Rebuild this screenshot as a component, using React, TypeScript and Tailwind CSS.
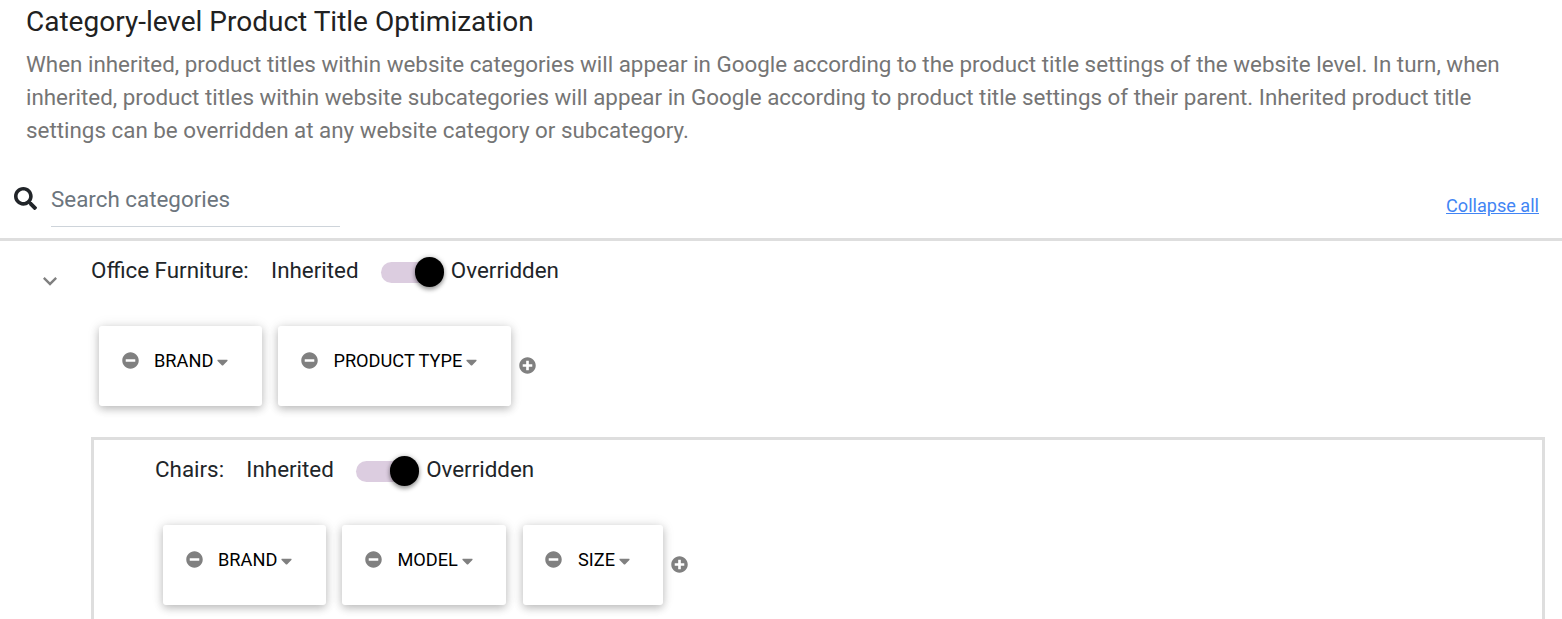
import { FaCaretDown, FaMinusCircle, FaPlusCircle, FaSearch } from "react-icons/fa";
import { MdExpandMore } from "react-icons/md";

interface CategoryProps {
  name: string;
  attributes: string[];
}

function Toggle() {
  return (
    <div className="relative w-[63px] h-[30px] ml-[22.5px] flex items-center shrink-0">
      <div className="w-[52px] h-[21px] rounded-full bg-[#dccde0]" />
      <div className="absolute right-0 top-0 w-[29.5px] h-[29.5px] rounded-full bg-black shadow-[0_3px_4px_rgba(0,0,0,0.3),0_0_5px_rgba(0,0,0,0.25)]" />
    </div>
  );
}

function AttributeCard({ label }: { label: string }) {
  return (
    <div className="h-20 pl-[22.5px] pr-[33.5px] pt-[21px] flex items-start rounded-[3px] bg-white shadow-[0_3px_8px_rgba(0,0,0,0.23),0_0_14px_rgba(0,0,0,0.09)]">
      <div className="h-7 flex items-center">
        <FaMinusCircle className="-mt-px size-[17px] text-[#808080]" />
        <span className="ml-[15.5px] text-[18.2px] leading-7 text-black whitespace-nowrap">{label}</span>
        <FaCaretDown className="ml-[4px] mt-px w-[11px] h-[18px] text-[#808080]" />
      </div>
    </div>
  );
}

function Category({ name, attributes }: CategoryProps) {
  return (
    <div>
      <div className="h-[30px] flex items-center text-[22.38px] text-[#212529]">
        <span className="-mt-[3px]">{name}:</span>
        <span className="ml-[22.3px] -mt-[3px]">Inherited</span>
        <Toggle />
        <span className="ml-[6.8px] -mt-[3px]">Overridden</span>
      </div>
      <div className="mt-[39px] ml-2 flex items-center">
        <div className="flex gap-[16.6px]">
          {attributes.map((label) => (
            <AttributeCard key={label} label={label} />
          ))}
        </div>
        <FaPlusCircle className="ml-2 -mt-px size-[17px] text-[#808080]" />
      </div>
    </div>
  );
}

export default function App() {
  return (
    <div className="w-full h-[619px] overflow-hidden bg-white font-[Roboto,sans-serif]">
      <header className="pl-[26px] pr-[40px] pt-[5px]">
        <h1 className="text-[28px] leading-[34px] text-[#212121]">
          Category-level Product Title Optimization
        </h1>
        <p className="mt-[9px] text-[22.385px] leading-[33px] text-[#757575]">
          When inherited, product titles within website categories will appear in Google according to the product title settings of the website level. In turn, when
          <br />
          inherited, product titles within website subcategories will appear in Google according to product title settings of their parent. Inherited product title
          <br />
          settings can be overridden at any website category or subcategory.
        </p>
      </header>

      <div className="mt-[26px] h-[65px] pl-[14px] pr-[23px] flex justify-between border-b-[3px] border-[#dedede] box-content">
        <div className="flex">
          <FaSearch className="mt-[14px] size-[23px] text-[#212529]" />
          <input
            type="text"
            placeholder="Search categories"
            className="ml-[14px] w-[289px] h-[54px] pb-[2px] text-[22.38px] border-b border-[#ced4da] outline-none placeholder:text-[#6c757d]"
          />
        </div>
        <a href="#" className="mt-[19px] h-7 text-[18.1px] leading-7 text-[#4285f4] underline">
          Collapse all
        </a>
      </div>

      <main className="flex pt-4">
        <MdExpandMore className="ml-9 mt-[10px] size-[28px] shrink-0 text-[#808080]" />
        <div className="ml-[27px] mr-[17px] flex-1">
          <Category name="Office Furniture" attributes={["BRAND", "PRODUCT TYPE"]} />
          <section className="mt-[31px] h-[240px] pl-[61px] pt-4 border-[3px] border-[#dedede]">
            <Category name="Chairs" attributes={["BRAND", "MODEL", "SIZE"]} />
          </section>
        </div>
      </main>
    </div>
  );
}
